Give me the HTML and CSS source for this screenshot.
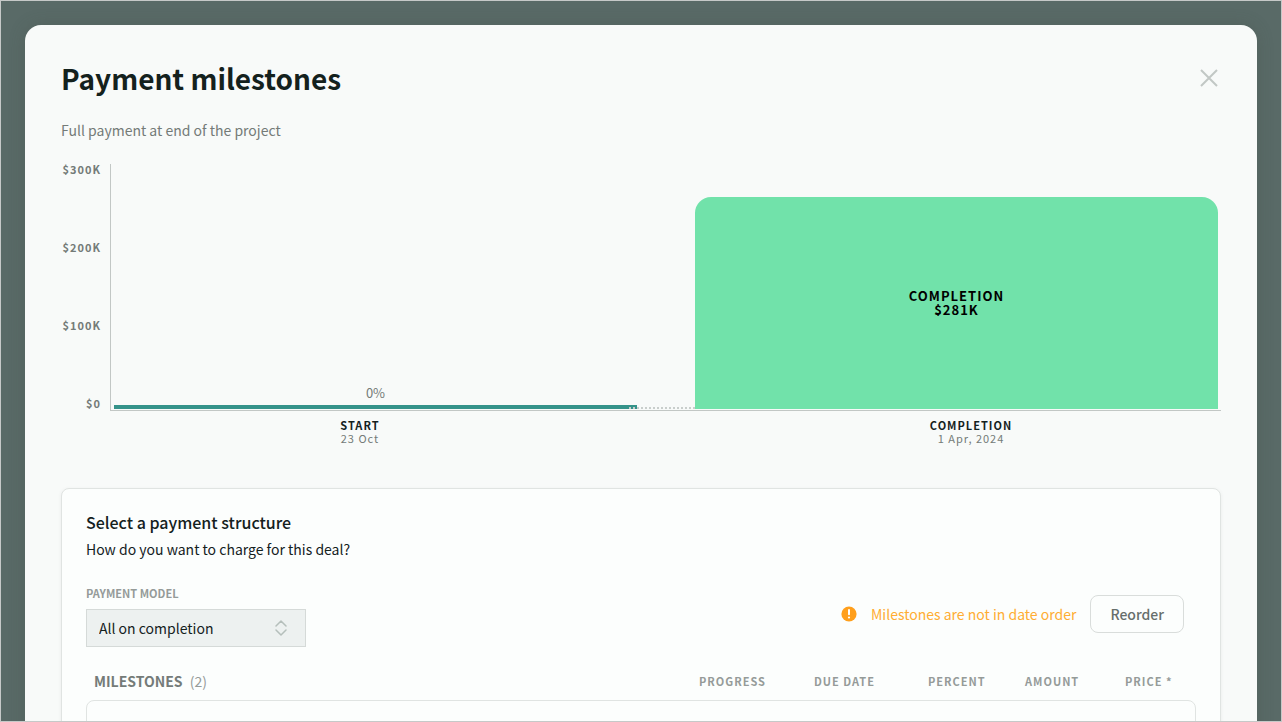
FILE: index.html
```html
<!DOCTYPE html>
<html lang="en">
<head>
<meta charset="utf-8">
<meta name="viewport" content="width=device-width, initial-scale=1">
<title>Payment milestones</title>
<link rel="stylesheet" href="styles.css">
</head>
<body>
<div class="backdrop">
  <main class="modal" role="dialog" aria-labelledby="modal-title">
    <header class="modal-header">
      <h1 class="modal-title" id="modal-title">Payment milestones</h1>
      <button class="close" type="button" aria-label="Close">
        <svg width="18" height="18" viewBox="0 0 18 18" fill="none" stroke="currentColor" stroke-width="2"><path d="M1 1l16 16M17 1L1 17"/></svg>
      </button>
    </header>
    <p class="summary">Full payment at end of the project</p>

    <section class="chart" aria-label="Payment schedule">
      <div class="y-axis"><span>$300K</span><span>$200K</span><span>$100K</span><span>$0</span></div>
      <div class="plot">
        <div class="stage">
          <span class="percent">0%</span>
          <div class="bar bar-start"></div>
        </div>
        <div class="link"></div>
        <div class="stage">
          <div class="bar bar-completion"><span>COMPLETION<br>$281K</span></div>
        </div>
      </div>
      <div class="x-axis">
        <div class="tick"><strong>START</strong><span>23 Oct</span></div>
        <div class="tick"><strong>COMPLETION</strong><span>1 Apr, 2024</span></div>
      </div>
    </section>

    <section class="card">
      <h2 class="card-title">Select a payment structure</h2>
      <p class="card-text">How do you want to charge for this deal?</p>
      <div class="controls">
        <div class="field">
          <label class="field-label" for="model">PAYMENT MODEL</label>
          <div class="select-wrap">
            <select class="select" id="model"><option>All on completion</option></select>
            <svg class="select-icon" width="12" height="16" viewBox="0 0 12 16" fill="none" stroke="currentColor" stroke-width="1.5" stroke-linecap="round" stroke-linejoin="round"><path d="M1 6l5-5 5 5M1 10l5 5 5-5"/></svg>
          </div>
        </div>
        <div class="notice">
          <svg class="notice-icon" width="16" height="16" viewBox="0 0 16 16"><circle cx="8" cy="8" r="7.6" fill="#ff9f1c"/><path d="M8 4v4.2" stroke="#fff" stroke-width="2" stroke-linecap="round"/><circle cx="8" cy="11.5" r="1.1" fill="#fff"/></svg>
          <span class="notice-text">Milestones are not in date order</span>
          <button class="reorder" type="button">Reorder</button>
        </div>
      </div>
      <table class="milestones">
        <thead>
          <tr>
            <th class="name" scope="col">MILESTONES <span class="count">(2)</span></th>
            <th class="progress" scope="col">PROGRESS</th>
            <th class="due" scope="col">DUE DATE</th>
            <th class="share" scope="col">PERCENT</th>
            <th class="amount" scope="col">AMOUNT</th>
            <th class="price" scope="col">PRICE *</th>
          </tr>
        </thead>
        <tbody><tr><td class="entry" colspan="6"></td></tr></tbody>
      </table>
    </section>
  </main>
</div>
</body>
</html>
```
FILE: styles.css
```css
* { box-sizing: border-box; }
body {
  margin: 0;
  font-family: "Noto Sans CJK SC", "Noto Sans", sans-serif;
  font-size: 14px;
  line-height: 24px;
  color: #14211d;
}
h1, h2, p { margin: 0; }
button, select { font: inherit; }
.backdrop {
  height: 100vh;
  overflow: hidden;
  padding: 24px;
  border: 1px solid #c6c9c8;
  background: #596a67;
}
.modal {
  padding: 35px 36px 36px;
  border-radius: 16px;
  background: #f8faf9;
  box-shadow: 0 0 16px rgba(70, 80, 70, 0.3);
}
.modal-header {
  display: flex;
  justify-content: space-between;
  align-items: center;
}
.modal-title { font-size: 28px; line-height: 36px; font-weight: 700; }
.close {
  display: flex;
  padding: 3px;
  border: 0;
  background: none;
  color: #c2c7c5;
}
.summary { margin-top: 22px; color: #747b78; }
.chart {
  display: grid;
  grid-template-columns: 40px 1fr;
  column-gap: 9px;
  margin-top: 22px;
  letter-spacing: 1px;
}
.y-axis {
  display: flex;
  flex-direction: column;
  justify-content: space-between;
  align-items: flex-end;
  padding-bottom: 2px;
  font-size: 11px;
  line-height: 11px;
  font-weight: 700;
  color: #747b78;
}
.plot {
  display: flex;
  align-items: flex-end;
  height: 247px;
  padding: 0 3px 1px;
  border-left: 1px solid #c2c7c5;
  border-bottom: 1px solid #c2c7c5;
}
.stage { flex: 1; text-align: center; }
.percent {
  display: block;
  font-size: 13px;
  line-height: 24px;
  letter-spacing: 0;
  color: #747b78;
}
.bar-start { height: 4px; background: #35938a; }
.link {
  width: 66px;
  margin-left: -8px;
  border-bottom: 2px dotted #c9cecc;
}
.bar-completion {
  display: flex;
  flex-direction: column;
  justify-content: center;
  align-items: center;
  height: 212px;
  border-radius: 16px 16px 0 0;
  background: #71e2aa;
  color: #000;
  font-size: 13px;
  line-height: 14px;
  font-weight: 700;
}
.x-axis {
  grid-column: 2;
  display: flex;
  justify-content: space-between;
  margin-top: 8px;
  font-size: 11px;
  line-height: 13px;
}
.tick {
  display: flex;
  flex-direction: column;
  align-items: center;
  width: 45%;
}
.tick span { color: #747b78; }
.card {
  margin-top: 43px;
  padding: 21px 24px 24px;
  border: 1px solid #e0e4e2;
  border-radius: 8px;
  background: #fcfefd;
  box-shadow: 0 1px 4px rgba(20, 33, 29, 0.06);
}
.card-title { font-size: 16px; line-height: 24px; font-weight: 500; }
.card-text { margin-top: 3px; }
.controls {
  display: flex;
  justify-content: space-between;
  align-items: flex-end;
  margin-top: 24px;
}
.field-label {
  display: block;
  margin-bottom: 8px;
  font-size: 11px;
  line-height: 16px;
  font-weight: 700;
  color: #959b99;
}
.select-wrap { position: relative; width: 220px; }
.select {
  display: block;
  width: 100%;
  height: 38px;
  padding: 0 12px;
  border: 1px solid #d5dad8;
  border-radius: 0;
  background: #edf1f0;
  color: #14211d;
  appearance: none;
}
.select-icon {
  position: absolute;
  top: 11px;
  right: 19px;
  color: #b5bfbb;
  pointer-events: none;
}
.notice {
  display: flex;
  align-items: center;
  gap: 14px;
  margin: 0 12px 14px 0;
}
.notice-text { color: #ffad33; }
.reorder {
  height: 38px;
  padding: 0 19px;
  border: 1px solid #d9dddb;
  border-radius: 8px;
  background: #fcfefd;
  color: #666e6b;
  font-weight: 500;
}
.milestones {
  width: 100%;
  margin-top: 23px;
  table-layout: fixed;
  border-collapse: separate;
  border-spacing: 0;
}
.milestones th {
  height: 30px;
  padding: 0 0 8px;
  font-size: 11px;
  line-height: 22px;
  font-weight: 700;
  text-align: left;
  letter-spacing: 1px;
  color: #959b99;
}
.milestones .name {
  padding-left: 8px;
  font-size: 14px;
  letter-spacing: 0;
  color: #747b78;
}
.count { margin-left: 4px; font-weight: 400; color: #959b99; }
.progress { width: 115px; }
.due { width: 114px; }
.share { width: 97px; }
.amount { width: 100px; }
.price { width: 71px; }
.entry {
  height: 72px;
  border: 1px solid #e0e4e2;
  border-radius: 8px;
}
```
